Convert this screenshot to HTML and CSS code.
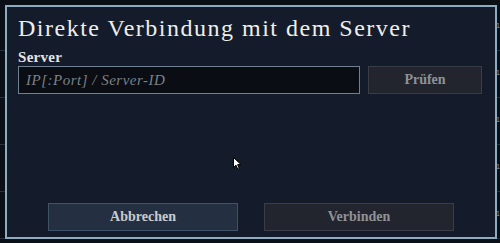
FILE: index.html
```html
<!DOCTYPE html>
<html lang="de">
<head>
<meta charset="utf-8">
<title>Direkte Verbindung mit dem Server</title>
<link rel="stylesheet" href="styles.css">
</head>
<body>
<div class="screen">
  <div class="behind">
    <span class="behind-row">1</span>
    <span class="behind-row">1</span>
    <span class="behind-row">1</span>
    <span class="behind-row">1</span>
    <span class="behind-row">1</span>
  </div>
  <div class="dialog">
    <h1 class="title">Direkte Verbindung mit dem Server</h1>
    <label class="label" for="server">Server</label>
    <div class="row">
      <input id="server" class="field" type="text" placeholder="IP[:Port] / Server-ID">
      <button class="btn btn-muted btn-check">Prüfen</button>
    </div>
    <div class="spacer"></div>
    <div class="actions">
      <button class="btn btn-primary">Abbrechen</button>
      <button class="btn btn-muted">Verbinden</button>
    </div>
  </div>
  <svg class="cursor" width="9" height="13" viewBox="0 0 9 13">
    <path d="M0.5 0.5 L0.5 10.5 L3 8.2 L4.8 12.2 L6.3 11.5 L4.6 7.6 L8 7.6 Z" fill="#ffffff" stroke="#000000" stroke-width="1"/>
  </svg>
</div>
</body>
</html>
```
FILE: styles.css
```css
* { box-sizing: border-box; }
html, body {
  margin: 0;
  padding: 0;
}
body {
  width: 500px;
  height: 243px;
  overflow: hidden;
  background-color: #0b1018;
  background-image: repeating-linear-gradient(to bottom, #0b1018 0, #0b1018 46px, #27313c 46px, #27313c 47px);
  background-position: 0 4px;
  font-family: "Liberation Serif", serif;
}
.screen {
  position: relative;
  width: 500px;
  height: 243px;
  padding: 5px 3px 4px 5px;
}
.behind {
  position: absolute;
  left: 496px;
  top: 21px;
  display: flex;
  flex-direction: column;
  gap: 37px;
}
.behind-row {
  font-family: "Liberation Sans", sans-serif;
  font-size: 7px;
  line-height: 10px;
  color: #8d97a3;
}
.dialog {
  position: relative;
  width: 492px;
  height: 234px;
  background: #141c2b;
  border: 2px solid #8eacc0;
  padding: 7px 13px 6px 11px;
  display: flex;
  flex-direction: column;
}
.title {
  margin: 0;
  font-weight: normal;
  font-size: 24px;
  line-height: 28px;
  letter-spacing: 1.5px;
  color: #efeee9;
  white-space: nowrap;
}
.label {
  display: block;
  margin-top: 7px;
  font-size: 15px;
  line-height: 17px;
  font-weight: bold;
  letter-spacing: 0.3px;
  color: #e4e4e4;
}
.row {
  display: flex;
  gap: 8px;
}
.field {
  width: 342px;
  height: 28px;
  margin: 0;
  background: #0a0d14;
  border: 1.5px solid #6f818e;
  padding: 0 7px;
  font-family: "Liberation Serif", serif;
  font-style: italic;
  font-size: 15px;
  letter-spacing: 0.5px;
  color: #d0d0d0;
  outline: none;
}
.field::placeholder {
  color: #7d8186;
  opacity: 1;
}
.btn {
  height: 28px;
  margin: 0;
  padding: 0;
  font-family: "Liberation Serif", serif;
  font-size: 14px;
  font-weight: bold;
  cursor: default;
}
.btn-check {
  width: 114px;
}
.btn-muted {
  background: #23252e;
  border: 1.5px solid #3a3d46;
  color: #8f9297;
}
.btn-primary {
  background: #243042;
  border: 1.5px solid #3f5266;
  color: #c9cbce;
}
.spacer {
  flex: 1;
}
.actions {
  display: flex;
  justify-content: center;
  gap: 26px;
  padding-left: 2px;
}
.actions .btn {
  width: 190px;
}
.cursor {
  position: absolute;
  left: 233px;
  top: 157px;
}
```
